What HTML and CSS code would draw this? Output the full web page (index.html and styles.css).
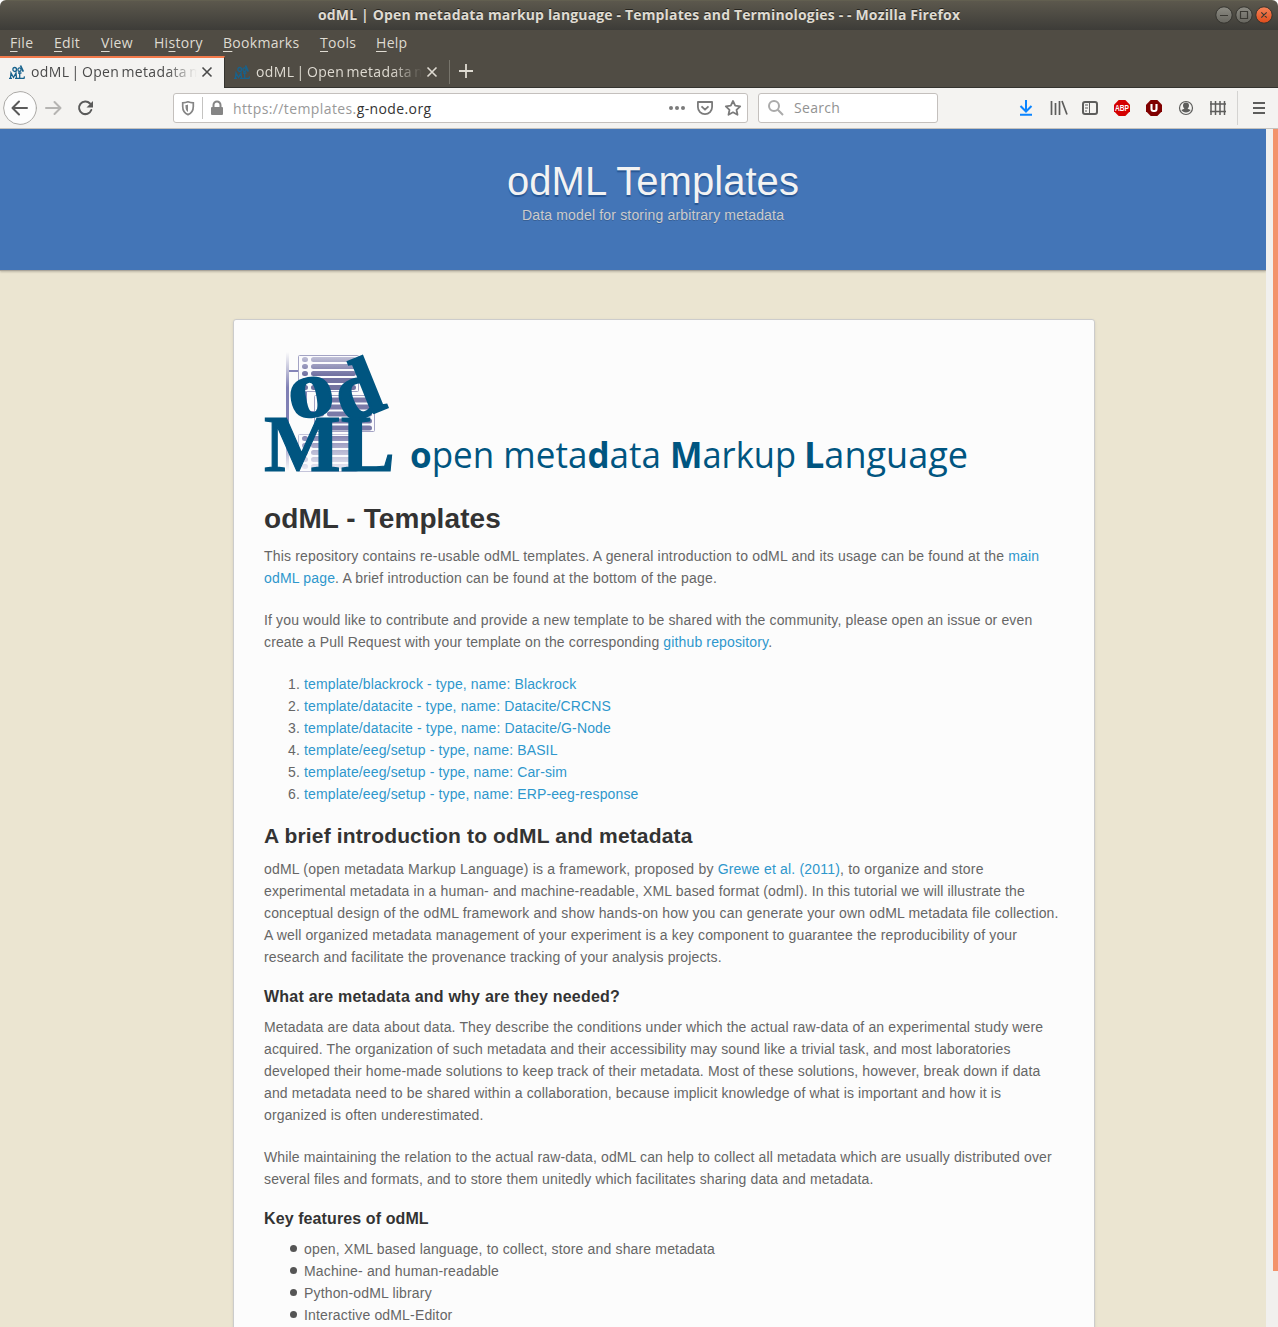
FILE: index.html
```html
<!DOCTYPE html>
<html lang="en">
<head>
<meta charset="utf-8">
<title>odML | Open metadata markup language</title>
<link rel="stylesheet" href="styles.css">
</head>
<body>
<div class="window">
  <div class="titlebar">
    <div class="caption">odML | Open metadata markup language - Templates and Terminologies - - Mozilla Firefox</div>
    <div class="controls">
      <svg width="60" height="20" viewBox="0 0 60 20">
        <defs>
          <linearGradient id="gray" x2="0" y2="1"><stop stop-color="#8d8c84"/><stop offset="1" stop-color="#66655e"/></linearGradient>
          <linearGradient id="red" x2="0" y2="1"><stop stop-color="#f58459"/><stop offset="1" stop-color="#df4b1a"/></linearGradient>
        </defs>
        <g stroke="#34332e"><circle cx="10" cy="10" r="8.2" fill="url(#gray)"/><circle cx="30" cy="10" r="8.2" fill="url(#gray)"/><circle cx="50" cy="10" r="8.2" fill="url(#red)"/></g>
        <path d="M6 10.5h8M26.5 6.500h7v7h-7zM47.300 7.300l5.400 5.400M52.700 7.300l-5.400 5.400" fill="none" stroke="#3a3933" stroke-width="1.2"/>
      </svg>
    </div>
  </div>
  <nav class="menubar">
    <span class="m-file"><u>F</u>ile</span><span class="m-edit"><u>E</u>dit</span><span class="m-view"><u>V</u>iew</span><span class="m-history">Hi<u>s</u>tory</span><span class="m-bookmarks"><u>B</u>ookmarks</span><span class="m-tools"><u>T</u>ools</span><span><u>H</u>elp</span>
  </nav>
  <div class="tabs">
    <div class="tab active">
      <svg class="fav" width="16" height="16" viewBox="0 0 16 16" fill="none" stroke="currentColor"><path d="M1.500 14l.5-5 2.500 4.500L7 9l.5 5M0 14.300h3M6 14.300h9l.5-2M9 9h3.500M10.700 9v5" stroke-width="1.300"/><ellipse cx="5.700" cy="5.500" rx="1.800" ry="2" stroke-width="1.300"/><ellipse cx="10.500" cy="5.700" rx="1.600" ry="1.800" stroke-width="1.300"/><path d="M11.500 1.500l2.800 6.200" stroke-width="1.700"/></svg>
      <span class="label">odML | Open metadata markup</span>
      <svg width="12" height="12" viewBox="0 0 12 12"><path d="M1.500 1.500l9 9M10.500 1.500l-9 9" fill="none" stroke="currentColor" stroke-width="1.600"/></svg>
    </div>
    <div class="tab">
      <svg class="fav" width="16" height="16" viewBox="0 0 16 16" fill="none" stroke="currentColor"><path d="M1.500 14l.5-5 2.500 4.500L7 9l.5 5M0 14.300h3M6 14.300h9l.5-2M9 9h3.500M10.700 9v5" stroke-width="1.300"/><ellipse cx="5.700" cy="5.500" rx="1.800" ry="2" stroke-width="1.300"/><ellipse cx="10.500" cy="5.700" rx="1.600" ry="1.800" stroke-width="1.300"/><path d="M11.500 1.500l2.800 6.200" stroke-width="1.700"/></svg>
      <span class="label">odML | Open metadata markup</span>
      <svg width="12" height="12" viewBox="0 0 12 12"><path d="M1.500 1.500l9 9M10.500 1.500l-9 9" fill="none" stroke="currentColor" stroke-width="1.600"/></svg>
    </div>
    <div class="newtab"><svg width="14" height="14" viewBox="0 0 14 14"><path d="M7 0v14M0 7h14" stroke="currentColor" stroke-width="1.8"/></svg></div>
  </div>
  <div class="toolbar">
    <div class="nav-icons">
      <svg width="100" height="36" viewBox="0 0 100 36" fill="none" stroke-width="2" stroke-linecap="round" stroke-linejoin="round">
        <circle cx="20" cy="18" r="16.4" fill="#fdfdfd" stroke="#aaa8a5" stroke-width="1"/>
        <path d="M27 18H13M19 11.500L12.500 18l6.500 6.500" stroke="#5a5a5a"/>
        <path d="M46 18h14M54.500 12l6 6-6 6" stroke="#b5b4b2"/>
        <path d="M90 13.500A6.300 6.300 0 1 0 91.300 20" stroke="#5a5a5a"/>
        <path d="M93 11v6.500h-6.500z" fill="#5a5a5a" stroke="none"/>
      </svg>
    </div>
    <div class="urlbar">
      <svg width="54" height="26" viewBox="0 0 54 26" fill="none">
        <path d="M14 6.800c2 .8 3.700 1 5.300 1v3.600c0 4-2 6.800-5.300 8.200-3.300-1.400-5.300-4.200-5.300-8.200V7.800c1.600 0 3.300-.2 5.300-1z" stroke="#858585" stroke-width="1.700"/>
        <path d="M14 9.500c-.8.400-1.500.5-2.500.6v2c0 2.300.8 3.900 2.500 5z" fill="#858585"/>
        <path d="M28.500 2v22" stroke="#c4c3c1"/>
        <rect x="37" y="12" width="12" height="8" rx="1" fill="#858585"/><path d="M39.500 12v-2a3.500 3.500 0 0 1 7 0v2" stroke="#858585" stroke-width="2"/>
      </svg>
      <span class="url">https://templates.<b>g-node.org</b></span>
      <svg width="86" height="26" viewBox="-6 0 86 26" fill="none" stroke="#7b7b7b" stroke-width="1.800" stroke-linejoin="round">
        <g fill="#7b7b7b" stroke="none"><circle cx="4" cy="13" r="2"/><circle cx="10" cy="13" r="2"/><circle cx="16" cy="13" r="2"/></g>
        <path d="M30.900 7h14.200v5a7.100 7.100 0 0 1-14.200 0zM34.500 11.300l3.500 3.400 3.500-3.400"/>
        <path d="M66 6l2.200 4.700 5 .6-3.700 3.500 1 5L66 17.300l-4.500 2.500 1-5-3.700-3.500 5-.6z"/>
      </svg>
    </div>
    <div class="search">
      <svg width="18" height="18" viewBox="0 0 18 18" fill="none" stroke="#aaa" stroke-width="2"><circle cx="7" cy="8" r="5"/><path d="M10.800 11.800l5.200 5.200"/></svg>
      <span>Search</span>
    </div>
    <svg class="tools" width="266" height="36" viewBox="0 0 266 36" fill="none" stroke="#5d5d5c">
      <path d="M14 10v11M8.500 16l5.500 5.500 5.500-5.500M8 24.800h12" stroke="#0a84ff" stroke-width="2"/>
      <path d="M39.500 11v14M43.500 13v12M47.500 11v14M50 11l5 13.500" stroke-width="1.700"/>
      <rect x="71" y="12" width="14" height="12" rx="2" stroke-width="2"/><path d="M77.500 12v12M73 15h3M73 18h3M73 21h2"/>
      <path d="M106.700 10h6.600l4.700 4.700v6.600l-4.700 4.700h-6.600l-4.700-4.700v-6.600z" fill="#d40000" stroke="none"/>
      <text x="103" y="21.300" fill="#fff" stroke="none" letter-spacing="0" font-family="Liberation Sans, sans-serif" font-weight="bold" font-size="9.500" textLength="14" lengthAdjust="spacingAndGlyphs">ABP</text>
      <path d="M138.700 10h6.600l4.700 4.700v6.600l-4.700 4.700h-6.600l-4.700-4.700v-6.600z" fill="#800000" stroke="none"/>
      <path d="M139.500 14v5a2 2 0 0 0 2 2h1a2 2 0 0 0 2-2v-5" stroke="#fff" stroke-width="2.100"/>
      <circle cx="174" cy="18" r="6.500" stroke-width="1.200"/><path d="M171 15.500a3 3 0 0 1 6 0c0 1.400-.6 2.400-1.300 3v.3l3 1.200c-1 1.500-2.800 2.500-4.700 2.500s-3.700-1-4.700-2.500l3-1.200v-.3c-.7-.6-1.300-1.600-1.300-3z" fill="#5d5d5c" stroke="none"/>
      <path d="M199 11v14M203.500 11v14M208 11v14M212.500 11v14M198 14h16M198 21.500h16" stroke-width="1.500"/>
      <path d="M225.500 1v34" stroke="#d4d3d1"/>
      <path d="M241 13h12M241 18h12M241 23h12" stroke-width="2"/>
    </svg>
  </div>
  <div class="viewport">
    <div class="page">
      <header>
        <div class="site-title">odML Templates</div>
        <div class="tagline">Data model for storing arbitrary metadata</div>
      </header>
      <main>
        <svg class="logo" width="710" height="130" viewBox="264 350 710 130">
          <defs>
            <linearGradient id="fade" gradientUnits="userSpaceOnUse" x1="0" y1="355" x2="0" y2="391"><stop stop-color="#6d6da2" stop-opacity=".35"/><stop offset=".55" stop-color="#7272a2"/><stop offset="1" stop-color="#72729f"/></linearGradient>
            <linearGradient id="fadeout" gradientUnits="userSpaceOnUse" x1="0" y1="434" x2="0" y2="471"><stop stop-color="#8080ae"/><stop offset="1" stop-color="#9999c2" stop-opacity=".15"/></linearGradient>
            <linearGradient id="pole" x2="0" y2="1"><stop stop-color="#8585b5" stop-opacity="0"/><stop offset=".3" stop-color="#8080b5"/><stop offset=".7" stop-color="#8080b5"/><stop offset="1" stop-color="#8080b5" stop-opacity="0"/></linearGradient>
          </defs>
          <path d="M286 352h3v119h-3z" fill="url(#pole)"/>
          <path d="M289 371h9M306 391v21h9M289 454h9" stroke="#8585b8" stroke-width="2" fill="none"/>
          <g fill="#fbfbfd" stroke="#a3a3c4">
            <rect x="298.500" y="355.500" width="60" height="36" rx="1"/><rect x="298.500" y="434.500" width="59" height="37" rx="1" stroke="#c4c4da"/><rect x="314.500" y="395.500" width="60" height="36" rx="1"/>
          </g>
          <g stroke-width="5" stroke-linecap="round">
            <path d="M304.500 359.500h1M313.500 359.500h40M304.500 366.500h1M313.500 366.500h40M304.500 373.500h1M313.500 373.500h40M304.500 380.500h1M313.500 380.500h40M304.500 387.500h1M313.500 387.500h40" stroke="url(#fade)"/>
            <path d="M320.500 400h1M329.500 400h40M320.500 407h1M329.500 407h40M320.500 414h1M329.500 414h40M320.500 421h1M329.500 421h40M320.500 428h1M329.500 428h40" stroke="#7a7aa8"/>
            <path d="M304.500 438.500h1M313.500 438.500h40M304.500 445.500h1M313.500 445.500h40M304.500 452.500h1M313.500 452.500h40M304.500 459.500h1M313.500 459.500h40M304.500 466.500h1M313.500 466.500h40" stroke="url(#fadeout)"/>
          </g>
          <g fill="#005580" font-family="Liberation Serif, serif" font-weight="bold" stroke="#005580">
            <text x="264" y="471" font-size="81" stroke-width="1.200" textLength="131" lengthAdjust="spacingAndGlyphs">ML</text>
            <text transform="translate(292 420) rotate(-10) scale(1.120 1)" font-size="82" stroke-width="2">o</text>
            <text transform="translate(346 424) rotate(-22)" font-size="82" stroke-width="2.500">d</text>
          </g>
          <g fill="#005580" font-family="Open Sans, sans-serif" font-size="36">
            <text x="410" y="468" textLength="251" lengthAdjust="spacingAndGlyphs"><tspan font-weight="bold">o</tspan>pen meta<tspan font-weight="bold">d</tspan>ata</text>
            <text x="670" y="468" textLength="126" lengthAdjust="spacingAndGlyphs"><tspan font-weight="bold">M</tspan>arkup</text>
            <text x="804" y="468" textLength="164" lengthAdjust="spacingAndGlyphs"><tspan font-weight="bold">L</tspan>anguage</text>
          </g>
        </svg>
        <h1>odML - Templates</h1>
        <p><span class="loose">This repository contains re-usable odML templates. A general introduction to odML and its usage can be found at the <a>main</a></span><br><span class="loose"><a>odML page</a>. A brief introduction can be found at the bottom of the page.</span></p>
        <p>If you would like to contribute and provide a new template to be shared with the community, please open an issue or even<br>create a Pull Request with your template on the corresponding <a>github repository</a>.</p>
        <ol>
          <li><a class="tight">template/blackrock - type, name: Blackrock</a></li>
          <li><a class="tight">template/datacite - type, name: Datacite/CRCNS</a></li>
          <li><a>template/datacite - type, name: Datacite/G-Node</a></li>
          <li><a>template/eeg/setup - type, name: BASIL</a></li>
          <li><a>template/eeg/setup - type, name: Car-sim</a></li>
          <li><a>template/eeg/setup - type, name: ERP-eeg-response</a></li>
        </ol>
        <h2>A brief introduction to odML and metadata</h2>
        <p><span class="looser">odML (open metadata Markup Language) is a framework, proposed by <a>Grewe et al. (2011)</a>, to organize and store</span><br>experimental metadata in a human- and machine-readable, XML based format (odml). In this tutorial we will illustrate the<br><span class="wide">conceptual design of the odML framework and show hands-on how you can generate your own odML metadata file collection.</span><br>A well organized metadata management of your experiment is a key component to guarantee the reproducibility of your<br><span class="tight">research and facilitate the provenance tracking of your analysis projects.</span></p>
        <h3>What are metadata and why are they needed?</h3>
        <p>Metadata are data about data. They describe the conditions under which the actual raw-data of an experimental study were<br><span class="tight">acquired. The organization of such metadata and their accessibility may sound like a trivial task, and most laboratories</span><br>developed their home-made solutions to keep track of their metadata. Most of these solutions, however, break down if data<br><span class="tight">and metadata need to be shared within a collaboration, because implicit knowledge of what is important and how it is</span><br>organized is often underestimated.</p>
        <p class="tight">While maintaining the relation to the actual raw-data, odML can help to collect all metadata which are usually distributed over<br>several files and formats, and to store them unitedly which facilitates sharing data and metadata.</p>
        <h3 class="key">Key features of odML</h3>
        <ul>
          <li>open, XML based language, to collect, store and share metadata</li>
          <li>Machine- and human-readable</li>
          <li>Python-odML library</li>
          <li>Interactive odML-Editor</li>
        </ul>
      </main>
    </div>
    <div class="scrollbar"><div class="thumb"></div></div>
  </div>
</div>
</body>
</html>
```
FILE: styles.css
```css
* { box-sizing: border-box; }
body { margin: 0; background: #fff; }
svg { display: block; flex: none; }
.window { width: 1278px; height: 1327px; overflow: hidden; display: flex; flex-direction: column; border-radius: 6px 6px 0 0; font-family: "Open Sans", "Noto Sans", sans-serif; font-size: 14px; letter-spacing: .3px; }
.titlebar { height: 30px; flex: none; display: flex; align-items: center; background: linear-gradient(#5c584d, #3d3c38); color: #dfdbd2; border-top: 1px solid #625f50; }
.caption { flex: 1; padding: 0 0 2px 318px; white-space: nowrap; font-weight: 700; font-size: 14px; letter-spacing: .15px; text-shadow: 0 -1px #25241f; }
.controls { margin: -1px 4px 0 0; }
.menubar { height: 26px; flex: none; display: flex; align-items: center; padding: 0 0 2px 10px; background: #504c44; color: #dfdbd2; white-space: nowrap; }
.menubar u { text-underline-offset: 3px; }
.m-file { width: 44px; }
.m-edit { width: 47px; }
.m-view { width: 53px; }
.m-history { width: 69px; }
.m-bookmarks { width: 97px; }
.m-tools { width: 56px; }
.tabs { height: 32px; flex: none; display: flex; background: #504c44; border-bottom: 1px solid #34332f; }
.tab { width: 225px; display: flex; align-items: center; padding: 0 12px 0 9px; color: #dfdbd2; }
.tab.active { height: 32px; padding: 0 11px 2px 9px; background: #f4f3f1; color: #4a4a4a; border-top: 2px solid #f37a4b; border-right: 1px solid #34332f; }
.fav { color: #17628d; }
.label { flex: 1; margin-left: 6px; margin-right: 4px; overflow: hidden; white-space: nowrap; word-spacing: -1.7px; letter-spacing: .35px; -webkit-mask-image: linear-gradient(to right, #000 82%, transparent); mask-image: linear-gradient(to right, #000 82%, transparent); }
.active .label { margin-top: -1px; }
.newtab { height: 24px; margin-top: 4px; margin-left: -1px; padding: 4px 9px; border-left: 1px solid #77746b; color: #dfdbd2; }
.toolbar { height: 41px; flex: none; display: flex; align-items: center; background: #f4f3f1; border-bottom: 1px solid #c4c2be; }
.nav-icons { width: 173px; }
.urlbar { width: 575px; height: 30px; display: flex; align-items: center; background: #fff; border: 1px solid #c4c0bd; border-radius: 3px; color: #999; }
.url { flex: 1; margin-left: 5px; white-space: nowrap; letter-spacing: .39px; }
.url b { font-weight: 400; color: #333; }
.search { width: 180px; height: 30px; margin-left: 10px; display: flex; align-items: center; padding: 0 0 2px 8px; background: #fff; border: 1px solid #c4c0bd; border-radius: 3px; color: #929292; }
.search span { margin-left: 9px; }
.tools { margin-left: 74px; }
.viewport { flex: 1; min-height: 0; display: flex; }
.page { width: 1266px; overflow: hidden; background: #ebe5d1; font-family: "Liberation Sans", Arial, sans-serif; color: #666; }
header { height: 142px; padding: 29px 0 0 40px; text-align: center; background: #4375b7; border-bottom: 1px solid #aaa59a; box-shadow: 0 1px 2px rgba(0,0,0,.2); }
.site-title { font-size: 40px; line-height: 46px; letter-spacing: .05px; color: #f3f3f3; text-shadow: 0 2px 1px #275693; }
.tagline { font-size: 14px; line-height: 22px; letter-spacing: .17px; color: #ccc; text-shadow: 0 1px #386197; }
main { width: 862px; height: 1100px; margin: 48px 0 0 233px; padding: 30px; background: #fcfcfc; border: 1px solid #ccc; border-radius: 3px; box-shadow: 0 1px 3px rgba(0,0,0,.1); line-height: 22px; font-size: 14px; letter-spacing: .14px; white-space: nowrap; }
.logo { letter-spacing: 0; }
h1, h2, h3 { color: #333; margin: 0; font-weight: 700; }
h1 { margin-top: 21px; font-size: 28px; line-height: 36px; letter-spacing: .09px; margin-bottom: 8px; }
h2 { font-size: 21px; line-height: 36px; margin: 13px 0 4px; letter-spacing: .15px; }
h3 { font-size: 16px; line-height: 22px; margin: -2px 0 8px; letter-spacing: .22px; }
h3.key { letter-spacing: .1px; }
p { margin: 0 0 20px; }
a { color: #2e97cc; }
.tight { letter-spacing: .128px; }
.wide { letter-spacing: .154px; }
.loose { letter-spacing: .172px; }
.looser { letter-spacing: .187px; }
ol, ul { margin: 0; padding-left: 40px; }
ul { list-style: none; }
ul li { display: flex; align-items: center; letter-spacing: .16px; }
ul li::before { content: ""; width: 7px; height: 7px; margin: 0 7px 2px -14px; border-radius: 50%; background: #555; }
.scrollbar { width: 12px; padding-left: 7px; background: #f1f0ee; }
.thumb { height: 1142px; background: #f3936b; }
```
